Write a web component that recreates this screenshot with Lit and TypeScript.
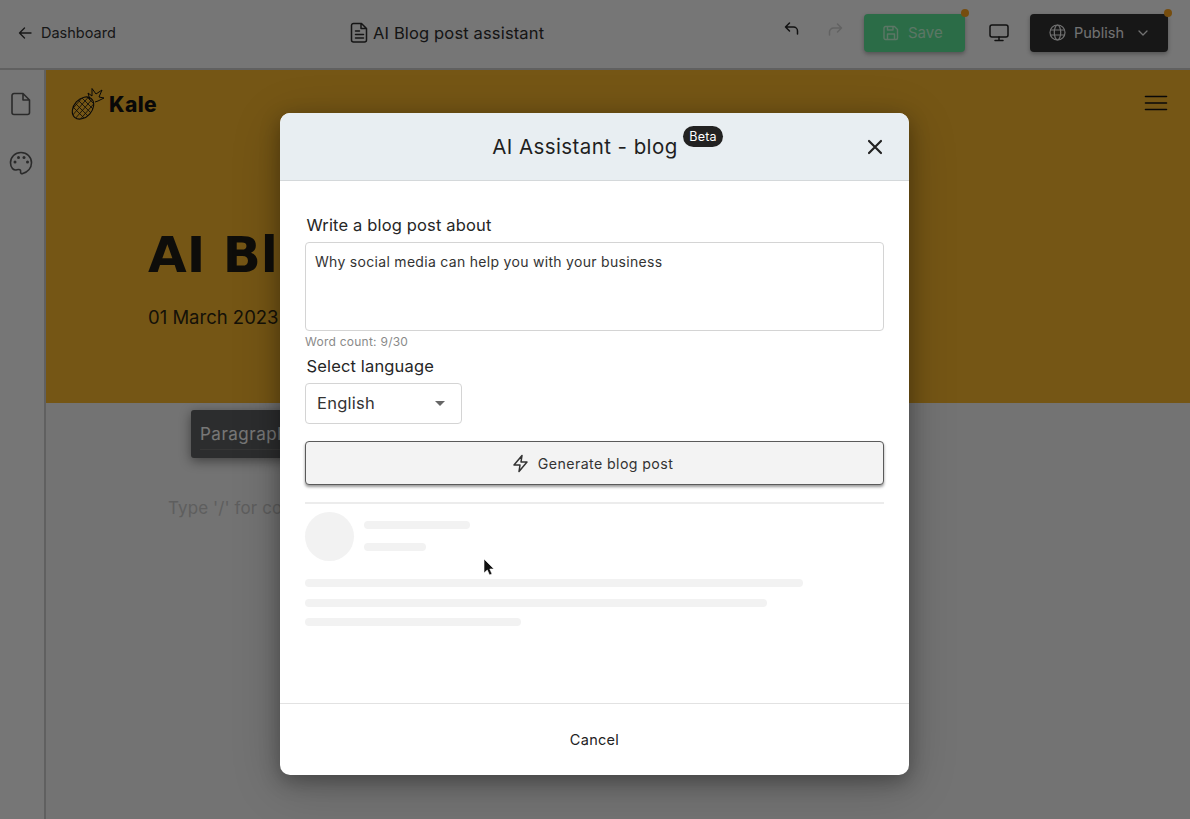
import { LitElement, html, css, svg } from "lit";
import { customElement } from "lit/decorators.js";

const ico = (w: number, h: number, vb: string, body: unknown, sw = 1.8) => html`<svg width=${w} height=${h} viewBox=${vb} fill="none" stroke="currentColor" stroke-width=${sw} stroke-linecap="round" stroke-linejoin="round">${body}</svg>`;

const pineapple = svg`
  <defs><clipPath id="pb"><ellipse cx="0" cy="0" rx="9" ry="12.5" transform="translate(12 21) rotate(42)"/></clipPath></defs>
  <ellipse cx="0" cy="0" rx="9" ry="12.5" transform="translate(12 21) rotate(42)" stroke-width="1.100"/>
  <g clip-path="url(#pb)" stroke-width=".8">
    <path d="M-4 14 18 36M-1 11 21 33M2 8 24 30M5 5 27 27M8 2 30 24M-3 27 18 3M0 30 21 6M3 33 24 9M6 36 27 12M9 39 30 15"/>
  </g>
  <path stroke-width="1" d="M19 13 17 6 21 9 21 1.500 25 7 31 3 28 10 33 11 27 14 24 15"/>`;

@customElement("app-root")
export class AppRoot extends LitElement {
  static styles = css`
    :host { display: block; height: 819px; overflow: hidden; position: relative; font-family: Inter, "Liberation Sans", sans-serif; color: #222; background: #e6e6e6; }
    * { box-sizing: border-box; }
    .page { height: 819px; display: flex; flex-direction: column; }
    .top { height: 70px; flex: none; display: flex; align-items: center; background: #ececec; border-bottom: 2px solid #c0c0c0; padding: 0 22px 3px 17px; }
    .back { width: 333px; flex: none; display: flex; align-items: center; gap: 8px; font-size: 14.500px; color: #303030; }
    .doc { display: flex; align-items: center; gap: 4px; font-size: 16.500px; letter-spacing: .15px; color: #2a2a2a; }
    .actions { margin-left: auto; display: flex; align-items: center; justify-content: flex-end; }
    .undo { display: flex; gap: 29px; color: #222; margin-right: 21px; margin-top: -3px; }
    .redo { color: #c4c4c4; }
    .save, .publish { position: relative; display: flex; align-items: center; height: 38px; border-radius: 4px; font-size: 14.500px; box-shadow: 0 2px 4px rgba(0,0,0,.3); }
    .save { width: 101px; background: #57d98f; color: #b8ecca; padding-left: 19px; gap: 9px; font-size: 15px; }
    .publish { width: 138px; background: #2e2e2e; color: #e4e4e4; padding-left: 19px; gap: 8px; }
    .dot { position: absolute; top: -5px; right: -4px; width: 8px; height: 8px; border-radius: 50%; background: #ed9a1d; }
    .screen { display: flex; margin: 0 21px 0 24px; color: #222; }
    .chev { display: flex; margin-left: 5px; }
    .main { flex: 1; display: flex; min-height: 0; }
    .side { width: 46px; flex: none; background: #ececec; border-right: 2px solid #c0c0c0; display: flex; flex-direction: column; align-items: center; gap: 35px; padding: 22px 2px 0 0; color: #555; }
    .canvas { flex: 1; display: flex; flex-direction: column; min-width: 0; background: #e6e6e6; }
    .hero { height: 333px; flex: none; background: #ebac2b; padding: 17px 22px 0 25px; color: #111; }
    .nav { display: flex; align-items: center; justify-content: space-between; color: #111; }
    .burger { display: flex; margin-top: -3px; }
    .brand { display: flex; align-items: center; gap: 4px; font-size: 21px; font-weight: 800; letter-spacing: .4px; }
    .hero h1 { margin: 104px 0 0 77px; font-family: "DejaVu Sans", Inter, sans-serif; font-size: 50px; line-height: 60px; font-weight: 700; white-space: nowrap; color: #1c1a14; }
    .date { margin: 19px 0 0 77px; font-size: 18.500px; line-height: 26px; color: #2a2410; }
    .below { flex: 1; padding: 7px 0 0 145px; }
    .toolbar { width: 190px; height: 48px; background: #595b5c; border-radius: 3px; padding: 14px 8px 0 9px; font-size: 17px; letter-spacing: .5px; color: #eeeeee; box-shadow: 0 3px 12px rgba(0,0,0,.45); }
    .tool-line { margin-top: 5px; height: 1px; background: #6c6c6c; }
    .ph { margin: 39px 0 0 -23px; font-size: 17px; line-height: 22px; color: #bdbdbd; white-space: nowrap; letter-spacing: .1px; }
    .veil { position: absolute; inset: 0; background: rgba(0,0,0,.5); }
    .modal { position: absolute; left: 280px; top: 113px; width: 629px; height: 662px; display: flex; flex-direction: column; background: #fff; border-radius: 10px; box-shadow: 0 6px 20px rgba(0,0,0,.3), 0 10px 50px rgba(0,0,0,.2); overflow: hidden; }
    .mhead { height: 68px; flex: none; background: #e8eef2; border-bottom: 1px solid #d4d8da; display: flex; align-items: center; justify-content: center; position: relative; font-size: 20.500px; letter-spacing: .42px; color: #1f1f1f; }
    .mtitle { position: relative; margin-left: -19px; }
    .beta { position: absolute; left: 191px; top: -8px; height: 21px; padding: 0 6px; border-radius: 11px; background: #222; color: #fff; font-size: 12.500px; line-height: 21px; letter-spacing: .2px; }
    .close { position: absolute; right: 25px; top: 25px; display: flex; color: #222; }
    .mbody { flex: 1; padding: 34px 25px 0; display: flex; flex-direction: column; min-height: 0; }
    .label { font-size: 16.500px; line-height: 20px; padding-left: 1.500px; color: #262626; letter-spacing: .15px; }
    .area { margin-top: 7px; height: 89px; border: 1.500px solid #d4d4d4; border-radius: 4px; padding: 9px 9px; font-size: 14px; line-height: 20px; letter-spacing: .3px; color: #333; }
    .count { margin-top: 3px; font-size: 12px; line-height: 15px; color: #8a8a8a; letter-spacing: .25px; }
    .lang { margin-top: 7px; }
    .select { margin-top: 7px; width: 157px; height: 41px; border: 1.500px solid #d4d4d4; border-radius: 4px; padding: 0 16px 1px 11px; display: flex; align-items: center; justify-content: space-between; font-size: 16.500px; letter-spacing: .25px; color: #333; }
    .caret { width: 0; height: 0; border-left: 5px solid transparent; border-right: 5px solid transparent; border-top: 5px solid #666; margin: 1px 0 0 0; }
    .gen { margin-top: 17px; height: 44px; border: 1.500px solid #5a5a5a; border-radius: 4px; background: #f3f3f3; box-shadow: 0 2px 3px rgba(0,0,0,.4); display: flex; align-items: center; justify-content: center; gap: 9px; padding-right: 4px; font-size: 14.200px; letter-spacing: .4px; color: #333; }
    .rule { margin-top: 17px; height: 2px; background: #ececec; flex: none; }
    .sk-head { display: flex; gap: 10px; margin-top: 8px; }
    .avatar { width: 49px; height: 49px; border-radius: 50%; background: #f2f2f2; }
    .sk-lines { display: flex; flex-direction: column; gap: 14px; padding-top: 9px; }
    .bar { height: 8px; border-radius: 4px; background: #f2f2f2; }
    .sk-para { display: flex; flex-direction: column; gap: 11.500px; margin-top: 18px; }
    .mfoot { height: 72px; flex: none; border-top: 1.500px solid #e2e2e2; display: flex; align-items: center; justify-content: center; font-size: 14.500px; letter-spacing: .3px; color: #222; }
    .cursor { position: absolute; left: 483px; top: 558px; display: flex; }
  `;

  private skeleton(width: number) {
    return html`<div class="bar" style="width:${width}px"></div>`;
  }

  render() {
    return html`
      <div class="page">
        <header class="top">
          <div class="back">
            ${ico(16, 16, "0 0 16 16", svg`<path d="M14 8H2.500M7.500 3 2.500 8l5 5"/>`, 1.4)}
            <span>Dashboard</span>
          </div>
          <div class="doc">
            ${ico(19, 21, "0 0 19 21", svg`<path d="M3.500 1.500h8l5 5v11.500a2 2 0 0 1-2 2h-11a2 2 0 0 1-2-2v-14.500a2 2 0 0 1 2-2zM11 1.500v5h5.500M5.500 9h4M5.500 12.500h8M5.500 16h8"/>`, 1.5)}
            <span>AI Blog post assistant</span>
          </div>
          <div class="actions">
            <div class="undo">
              ${ico(15, 15, "0 0 15 15", svg`<path d="M5.500 2 1.500 6l4 4M1.500 6h8a4 4 0 0 1 4 4v3"/>`, 1.5)}
              <span class="redo">${ico(15, 15, "0 0 15 15", svg`<path d="M9.500 2l4 4-4 4M13.500 6h-8a4 4 0 0 0-4 4v3"/>`, 1.5)}</span>
            </div>
            <div class="save">
              ${ico(16, 16, "0 0 16 16", svg`<path d="M2.500 1.500h9l3 3v8.500a1.500 1.500 0 0 1-1.500 1.500h-10.500a1.500 1.500 0 0 1-1.500-1.500v-10a1.500 1.500 0 0 1 1.500-1.500zM4.500 14.500v-5.500h7v5.500M4.500 1.500v3.500h5.500v-3.500"/>`, 1.4)}
              <span>Save</span><span class="dot"></span>
            </div>
            <span class="screen">${ico(20, 18, "0 0 20 18", svg`<rect x="1" y="1" width="18" height="12" rx="2"/><path d="M10 13v3.500M6 16.500h8"/>`, 1.5)}</span>
            <div class="publish">
              ${ico(17, 17, "0 0 17 17", svg`<circle cx="8.500" cy="8.500" r="7.500"/><ellipse cx="8.500" cy="8.500" rx="3.200" ry="7.500"/><path d="M1.500 6h14M1.500 11h14"/>`, 1.2)}
              <span>Publish</span>
              <span class="chev">${ico(12, 12, "0 0 12 12", svg`<path d="M2 4l4 4 4-4"/>`, 1.3)}</span>
              <span class="dot"></span>
            </div>
          </div>
        </header>
        <div class="main">
          <aside class="side">
            ${ico(20, 24, "0 0 20 24", svg`<path d="M3 1.500h9l6.500 6.500v12.500a2 2 0 0 1-2 2h-13.500a2 2 0 0 1-2-2v-17a2 2 0 0 1 2-2zM12 1.500v6.500h6.500"/>`, 1.6)}
            ${ico(24, 24, "0 0 24 24", svg`<path d="M12 1.500c-6 0-10.500 4.500-10.500 10.300 0 5.300 3.300 8 6.400 7 2.500-.8 4.100.2 3.700 1.800-.4 1.600.8 2.400 2.200 1.900 5-1.600 8.700-5.700 8.700-10.700 0-5.800-4.500-10.300-10.500-10.300z"/><g fill="currentColor" stroke="none"><circle cx="6" cy="11" r="1.500"/><circle cx="9.500" cy="6.500" r="1.500"/><circle cx="15" cy="6.500" r="1.500"/><circle cx="18.500" cy="11" r="1.500"/></g>`, 1.6)}
          </aside>
          <main class="canvas">
            <section class="hero">
              <div class="nav">
                <div class="brand">
                  <svg width="34" height="34" viewBox="0 0 34 34" fill="none" stroke="currentColor" stroke-linejoin="round">${pineapple}</svg>
                  <span>Kale</span>
                </div>
                <span class="burger">${ico(24, 18, "0 0 24 18", svg`<path d="M1.500 2.500h21M1.500 9h21M1.500 15.500h21"/>`, 1.600)}</span>
              </div>
              <h1>AI Blog post assistant</h1>
              <div class="date">01 March 2023</div>
            </section>
            <section class="below">
              <div class="toolbar">Paragraph<div class="tool-line"></div></div>
              <div class="ph">Type '/' for commands</div>
            </section>
          </main>
        </div>
      </div>
      <div class="veil"></div>
      <div class="modal">
        <div class="mhead">
          <div class="mtitle">AI Assistant - blog<span class="beta">Beta</span></div>
          <span class="close">${ico(18, 18, "0 0 18 18", svg`<path d="M3 3l12 12M15 3 3 15"/>`, 2.2)}</span>
        </div>
        <div class="mbody">
          <div class="label">Write a blog post about</div>
          <div class="area">Why social media can help you with your business</div>
          <div class="count">Word count: 9/30</div>
          <div class="label lang">Select language</div>
          <div class="select"><span>English</span><span class="caret"></span></div>
          <div class="gen">
            ${ico(17, 19, "0 0 17 19", svg`<path d="M10 1.500 2 11h6l-1 6.500L15 8H9z"/>`, 1.5)}
            <span>Generate blog post</span>
          </div>
          <div class="rule"></div>
          <div class="sk-head">
            <div class="avatar"></div>
            <div class="sk-lines">${this.skeleton(106)}${this.skeleton(62)}</div>
          </div>
          <div class="sk-para">${this.skeleton(498)}${this.skeleton(462)}${this.skeleton(216)}</div>
        </div>
        <div class="mfoot">Cancel</div>
      </div>
      <svg class="cursor" width="13" height="19" viewBox="0 0 13 19"><path d="M1 1v14l3.300-3 2.200 5 2.500-1-2.200-5H11z" fill="#111" stroke="#fff" stroke-width=".6"/></svg>
    `;
  }
}
